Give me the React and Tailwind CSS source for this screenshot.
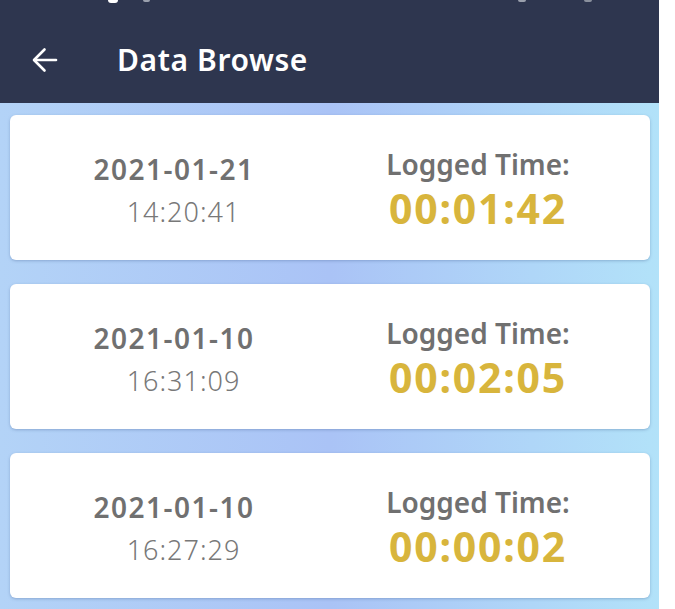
const records = [
  { date: "2021-01-21", time: "14:20:41", logged: "00:01:42" },
  { date: "2021-01-10", time: "16:31:09", logged: "00:02:05" },
  { date: "2021-01-10", time: "16:27:29", logged: "00:00:02" },
];

const BackArrow = () => (
  <svg width="26" height="26" viewBox="0 0 26 26" fill="none" stroke="white" strokeWidth="2.6" strokeLinecap="round" strokeLinejoin="round">
    <path d="M24 13H2.5" />
    <path d="M12.5 2.5L2 13l10.5 10.5" />
  </svg>
);

const RecordCard = ({ date, time, logged }) => (
  <div className="flex items-center h-[145px] bg-white rounded-[6px] shadow-[0_1px_3px_rgba(60,90,140,0.35)] pr-[32px]">
    <div className="w-[328px] flex flex-col items-center pt-[4px]">
      <p className="text-[28px] leading-[36px] font-semibold tracking-[1.5px] text-[#707070]">{date}</p>
      <p className="text-[27px] leading-[32px] font-light tracking-[1px] text-[#787878] mt-[9px] ml-[19px]">{time}</p>
    </div>
    <div className="flex-1 flex flex-col items-center">
      <p className="text-[28px] leading-[36px] font-semibold text-[#707070]">Logged Time:</p>
      <p className="text-[41px] leading-[44px] font-bold tracking-[1.8px] text-[#d8b53c] mt-[4px]">{logged}</p>
    </div>
  </div>
);

const App = () => {
  return (
    <div className="w-[675px] h-[609px] bg-white overflow-hidden" style={{ fontFamily: "'Noto Sans', 'Open Sans', sans-serif" }}>
      <div className="w-[659px] h-[609px] flex flex-col bg-gradient-to-r from-[#b3d3f7] via-[#aac3f6] to-[#b2e2f9]">
        <header className="h-[103px] bg-[#2e364f] flex items-center pl-[32px] pt-[16px] relative">
          <span className="absolute top-0 left-[108px] w-[10px] h-[3px] bg-white rounded-b-full" />
          <span className="absolute top-0 left-[143px] w-[7px] h-[2px] bg-[#9aa0ad] rounded-b-full" />
          <span className="absolute top-0 left-[518px] w-[8px] h-[2px] bg-[#9aa0ad] rounded-b-full" />
          <span className="absolute top-0 left-[584px] w-[8px] h-[2px] bg-[#8a909d] rounded-b-full" />
          <BackArrow />
          <h1 className="ml-[59px] text-white text-[30px] font-semibold tracking-[0.6px] leading-none">Data Browse</h1>
        </header>
        <main className="flex flex-col gap-[24px] pt-[12px] pl-[10px] pr-[9px]">
          {records.map((r, i) => (
            <RecordCard key={i} {...r} />
          ))}
        </main>
      </div>
    </div>
  );
};

export default App;
